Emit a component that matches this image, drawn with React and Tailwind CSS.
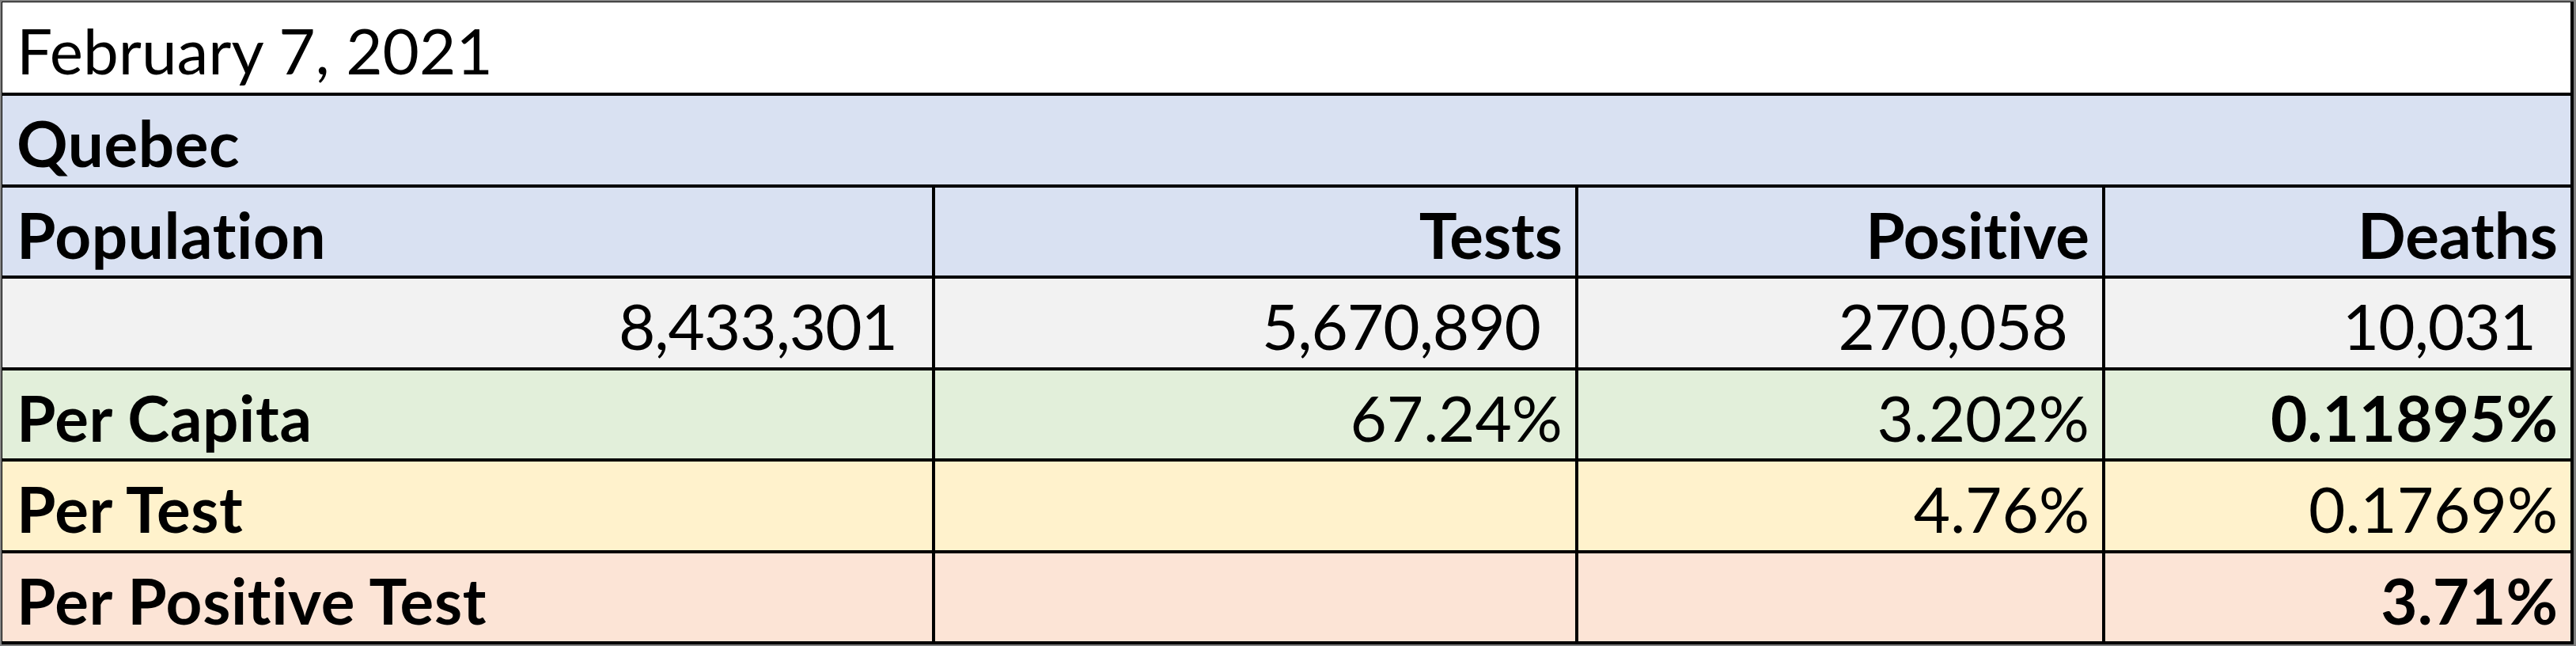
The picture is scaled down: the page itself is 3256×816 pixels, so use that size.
import React from "react";

const font = { fontFamily: "Lato, 'Open Sans', sans-serif" };

const Cell = ({ bg, right, num, bold, children, span }) => (
  <div
    className={`${bg} flex items-center ${span ? "col-span-4" : ""} ${
      right ? "justify-end" : "justify-start pl-[18px]"
    } ${right ? (num ? "pr-[44px] tracking-[-1px]" : "pr-[16px]") : ""} ${
      bold ? "font-bold" : "font-normal"
    } ${bold && !right ? "tracking-[0.6px]" : ""} text-[80px] leading-none text-black [font-variant-ligatures:none]`}
  >
    <span className="pt-[6px]">{children}</span>
  </div>
);

const App = () => {
  return (
    <div className="w-[3256px] h-[816px] bg-[#7f7f7f] pt-[2px] pl-[2px] pr-[3px] pb-[2px]" style={font}>
      <div className="grid grid-cols-[1175px_809px_662px_588px] grid-rows-[114px_112px_111px_112px_111px_112px_111px] gap-[4px] bg-black pt-[1px] pl-[1px] pr-[4px] pb-[4px]">
        <Cell bg="bg-white" span>February 7, 2021</Cell>
        <Cell bg="bg-[#d9e1f2]" span bold>Quebec</Cell>

        <Cell bg="bg-[#d9e1f2]" bold>Population</Cell>
        <Cell bg="bg-[#d9e1f2]" bold right>Tests</Cell>
        <Cell bg="bg-[#d9e1f2]" bold right>Positive</Cell>
        <Cell bg="bg-[#d9e1f2]" bold right>Deaths</Cell>

        <Cell bg="bg-[#f2f2f2]" right num>8,433,301</Cell>
        <Cell bg="bg-[#f2f2f2]" right num>5,670,890</Cell>
        <Cell bg="bg-[#f2f2f2]" right num>270,058</Cell>
        <Cell bg="bg-[#f2f2f2]" right num>10,031</Cell>

        <Cell bg="bg-[#e2efda]" bold>Per Capita</Cell>
        <Cell bg="bg-[#e2efda]" right>67.24%</Cell>
        <Cell bg="bg-[#e2efda]" right>3.202%</Cell>
        <Cell bg="bg-[#e2efda]" right bold>0.11895%</Cell>

        <Cell bg="bg-[#fff2cc]" bold>Per Test</Cell>
        <Cell bg="bg-[#fff2cc]" right></Cell>
        <Cell bg="bg-[#fff2cc]" right>4.76%</Cell>
        <Cell bg="bg-[#fff2cc]" right>0.1769%</Cell>

        <Cell bg="bg-[#fce4d6]" bold>Per Positive Test</Cell>
        <Cell bg="bg-[#fce4d6]" right></Cell>
        <Cell bg="bg-[#fce4d6]" right></Cell>
        <Cell bg="bg-[#fce4d6]" right bold>3.71%</Cell>
      </div>
    </div>
  );
};

export default App;
